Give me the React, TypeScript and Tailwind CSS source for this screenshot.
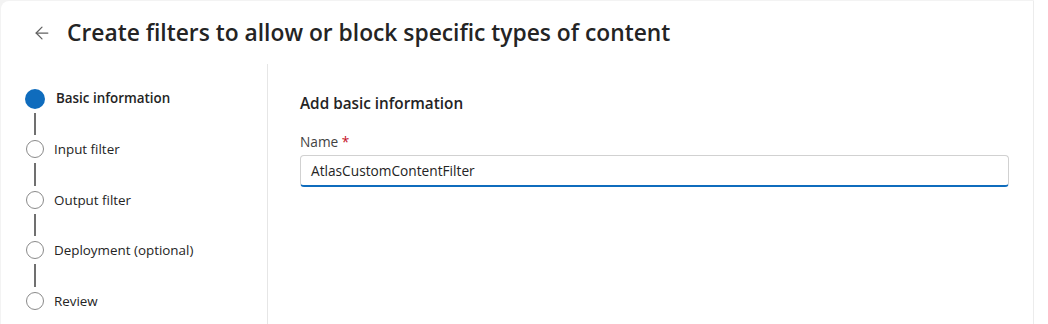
import { ArrowLeft } from "lucide-react";

const steps = [
  { label: "Basic information", active: true },
  { label: "Input filter" },
  { label: "Output filter" },
  { label: "Deployment (optional)" },
  { label: "Review" },
];

export default function App() {
  return (
    <div
      className="h-[324px] w-[1048px] overflow-hidden bg-white flex"
      style={{ fontFamily: '"Segoe UI", "Open Sans", "Noto Sans", sans-serif' }}
    >
      <div className="flex-1 bg-[#f3f3f3] pt-px pl-px">
        <div className="h-full bg-white rounded-tl-lg border-r border-[#ececec] flex flex-col">
          {/* header */}
          <div className="h-[63px] flex items-center pl-[31px] pt-px">
            <ArrowLeft className="h-5 w-5 text-[#616161]" strokeWidth={1.5} />
            <h1 className="ml-[15px] text-[22.8px] font-semibold text-[#242424]">
              Create filters to allow or block specific types of content
            </h1>
          </div>

          <div className="flex flex-1">
            {/* stepper */}
            <div className="w-[267px] border-r border-[#e6e6e6] pl-[24px] pt-[24.5px]">
              {steps.map((s, i) => (
                <div key={s.label}>
                  <div className="flex items-center h-[20px]">
                    {s.active ? (
                      <span className="h-[20px] w-[20px] rounded-full bg-[#0f6cbd] shrink-0" />
                    ) : (
                      <span className="ml-px h-[18px] w-[18px] rounded-full border-[1.5px] border-[#8a8a8a] shrink-0" />
                    )}
                    <span
                      className={
                        "text-[13.4px] text-[#242424] " +
                        (s.active ? "ml-[11px] font-semibold" : "ml-[10px]")
                      }
                    >
                      {s.label}
                    </span>
                  </div>
                  {i < steps.length - 1 && (
                    <div className="h-[30.6px] ml-[9px] py-[4px]">
                      <div className="h-full w-[2px] bg-[#707070]" />
                    </div>
                  )}
                </div>
              ))}
            </div>

            {/* form */}
            <div className="flex-1 pl-[32px] pr-[24px] pt-[28px]">
              <h2 className="text-[15.3px] font-semibold text-[#242424]">Add basic information</h2>
              <label className="block mt-[17px] text-[13.7px] text-[#424242]">
                Name <span className="text-[#c50f1f]">*</span>
              </label>
              <div className="mt-[3px] h-[32px] rounded-[4px] border border-[#d1d1d1] border-b-2 border-b-[#0f6cbd] flex items-center px-[10px]">
                <span className="text-[13.7px] text-[#242424]">AtlasCustomContentFilter</span>
              </div>
            </div>
          </div>
        </div>
      </div>
      <div className="w-[14px]" />
    </div>
  );
}
